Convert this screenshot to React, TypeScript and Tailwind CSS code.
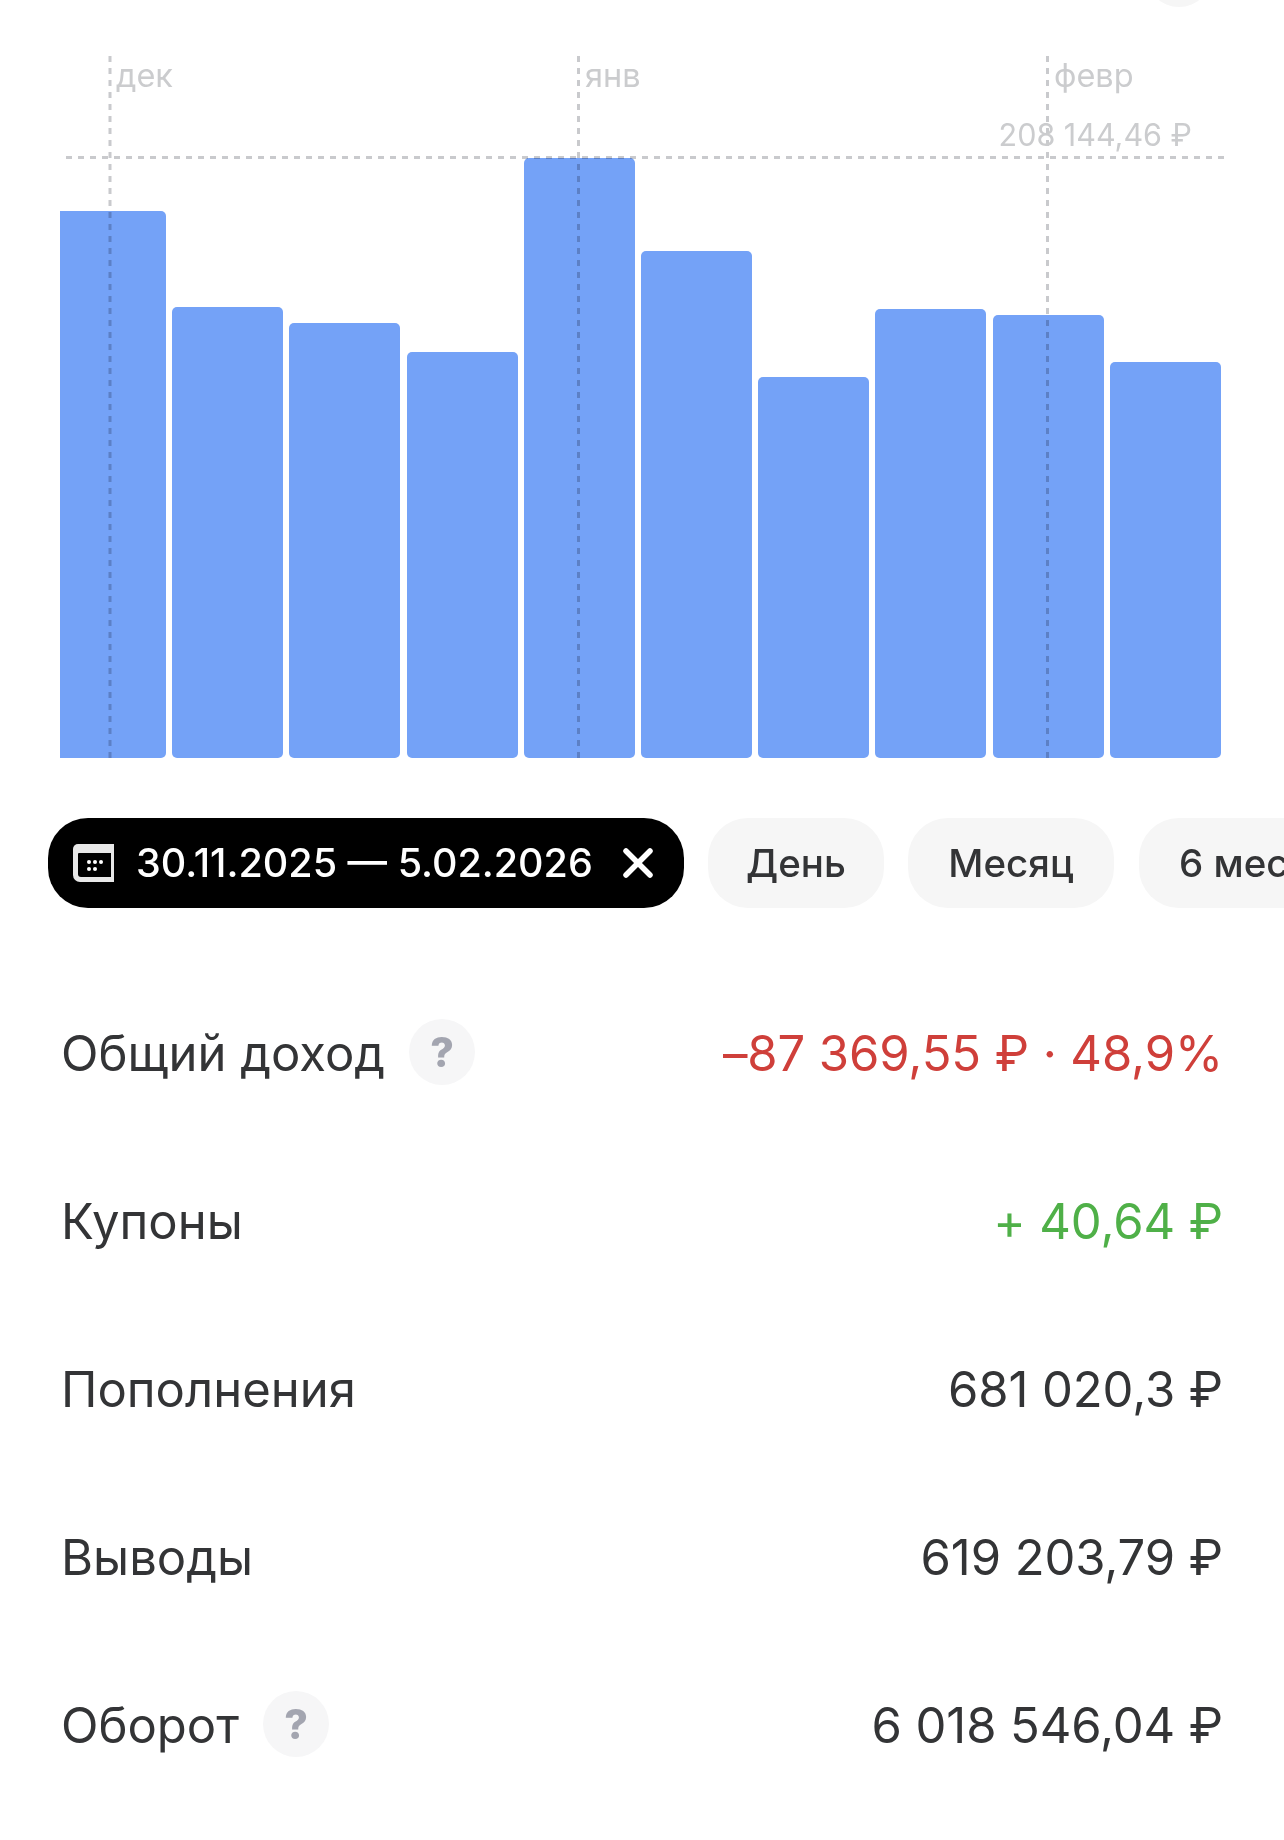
const FONT = "font-['Inter','Liberation_Sans',sans-serif]";

const bars = [
  { w: "w-[106px] rounded-l-none", h: "h-[547px]" },
  { w: "w-[111px]", h: "h-[451px]" },
  { w: "w-[111px]", h: "h-[435px]" },
  { w: "w-[111px]", h: "h-[406px]" },
  { w: "w-[111px]", h: "h-[600px]" },
  { w: "w-[111px]", h: "h-[507px]" },
  { w: "w-[111px]", h: "h-[381px]" },
  { w: "w-[111px]", h: "h-[449px]" },
  { w: "w-[111px]", h: "h-[443px]" },
  { w: "w-[111px]", h: "h-[396px]" },
];

function Help() {
  return (
    <span className="flex h-[66px] w-[66px] items-center justify-center rounded-full bg-[#f6f6f7] text-[41px] font-extrabold leading-none text-[#a3a5b0]">
      ?
    </span>
  );
}

function Row({ label, value, color, help, gap }: { label: string; value: string; color: string; help?: boolean; gap?: string }) {
  return (
    <div className="flex h-[168px] items-center justify-between">
      <div className={`flex items-center ${gap ?? ""}`}>
        <span className="pt-[2px] text-[49px] leading-none text-[#333436]">{label}</span>
        {help && <Help />}
      </div>
      <span className={`pt-[2px] text-[49px] leading-none tracking-[-0.1px] ${color}`}>{value}</span>
    </div>
  );
}

function Chip({ text, cls }: { text: string; cls: string }) {
  return (
    <div className={`flex h-[90px] shrink-0 items-center rounded-[40px] bg-[#f6f6f6] pt-[2px] text-[38.5px] font-medium text-[#333436] ${cls}`}>
      {text}
    </div>
  );
}

export default function App() {
  return (
    <div className={`relative h-[1840px] w-[1284px] overflow-hidden bg-white ${FONT}`}>
      <div className="absolute right-[72px] top-[-59px] h-[66px] w-[66px] rounded-full bg-[#f6f6f6]" />

      <section className="relative h-[758px] pt-[158px]">
        <div className="flex h-[600px] items-end gap-[6.2px] pl-[60px]">
          {bars.map((b, i) => (
            <div key={i} className={`rounded-[5px] bg-[#74a2f7] ${b.w} ${b.h}`} />
          ))}
        </div>

        <svg className="pointer-events-none absolute inset-0 mix-blend-multiply" width="1284" height="758" fill="none" stroke="#c9cacd" strokeWidth="3" strokeDasharray="6 6">
          <line x1="110" y1="56" x2="110" y2="758" />
          <line x1="578.5" y1="56" x2="578.5" y2="758" />
          <line x1="1047.5" y1="56" x2="1047.5" y2="758" />
          <line x1="66" y1="157.5" x2="1224" y2="157.5" />
        </svg>

        <span className="absolute left-[116px] top-[58px] text-[32.5px] leading-[36px] text-[#cbccce]">дек</span>
        <span className="absolute left-[585px] top-[58px] text-[32.5px] leading-[36px] text-[#cbccce]">янв</span>
        <span className="absolute left-[1054px] top-[58px] text-[32.5px] leading-[36px] text-[#cbccce]">февр</span>
        <span className="absolute right-[92px] top-[117px] text-[30.5px] leading-[36px] text-[#cbccce]">208 144,46 ₽</span>
      </section>

      <div className="mt-[60px] flex gap-[24px] overflow-hidden pl-[48px]">
        <div className="flex h-[90px] w-[636px] shrink-0 items-center rounded-[40px] bg-black pl-[25px] text-white">
          <svg width="41" height="38" viewBox="0 0 41 38" className="shrink-0">
            <path d="M5 0H41V38H7a7 7 0 0 1-7-7V5a5 5 0 0 1 5-5Z" fill="#e8e8e8" />
            <path d="M6 9H38V33H8a3 3 0 0 1-3-3V10a1 1 0 0 1 1-1Z" fill="#000" />
            <g fill="#fff">
              <circle cx="16" cy="18" r="2" /><circle cx="22" cy="18" r="2" /><circle cx="28" cy="18" r="2" />
              <circle cx="16" cy="25" r="2" /><circle cx="22" cy="25" r="2" />
            </g>
          </svg>
          <span className="ml-[22px] w-[486px] whitespace-nowrap pt-[2px] text-[39.5px] font-medium leading-none">30.11.2025 — 5.02.2026</span>
          <svg width="32" height="32" viewBox="0 0 32 32" fill="none" stroke="#fff" strokeWidth="5.5" strokeLinecap="round">
            <line x1="4" y1="4" x2="28" y2="28" />
            <line x1="28" y1="4" x2="4" y2="28" />
          </svg>
        </div>
        <Chip text="День" cls="w-[176px] justify-center" />
        <Chip text="Месяц" cls="w-[206px] justify-center" />
        <Chip text="6 месяцев" cls="ml-[1px] pl-[40px] pr-[40px]" />
      </div>

      <div className="mt-[60px] px-[61px]">
        <Row label="Общий доход" value="–87 369,55 ₽ · 48,9%" color="text-[#cf3f3a]" help gap="gap-[24px]" />
        <Row label="Купоны" value="+ 40,64 ₽" color="text-[#4fb048]" />
        <Row label="Пополнения" value="681 020,3 ₽" color="text-[#333436]" />
        <Row label="Выводы" value="619 203,79 ₽" color="text-[#333436]" />
        <Row label="Оборот" value="6 018 546,04 ₽" color="text-[#333436]" help gap="gap-[24px]" />
      </div>
    </div>
  );
}
